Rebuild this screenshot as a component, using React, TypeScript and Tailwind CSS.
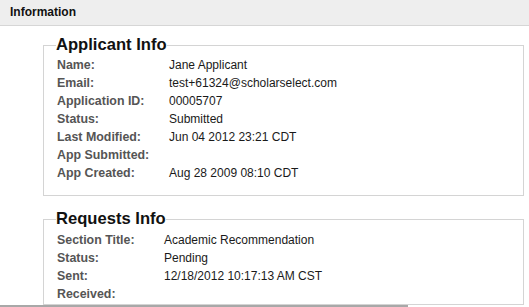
import React from "react";

const applicant: [string, string][] = [
  ["Name:", "Jane Applicant"],
  ["Email:", "test+61324@scholarselect.com"],
  ["Application ID:", "00005707"],
  ["Status:", "Submitted"],
  ["Last Modified:", "Jun 04 2012 23:21 CDT"],
  ["App Submitted:", ""],
  ["App Created:", "Aug 28 2009 08:10 CDT"],
];

const requests: [string, string][] = [
  ["Section Title:", "Academic Recommendation"],
  ["Status:", "Pending"],
  ["Sent:", "12/18/2012 10:17:13 AM CST"],
  ["Received:", ""],
];

function Rows({ rows, labelWidth }: { rows: [string, string][]; labelWidth: "a" | "b" }) {
  return (
    <div className={labelWidth === "a" ? "grid grid-cols-[112px_1fr]" : "grid grid-cols-[107px_1fr]"}>
      {rows.map(([k, v]) => (
        <React.Fragment key={k}>
          <div className="h-[18px] leading-[18px] text-[12.4px] font-bold text-[#555555] whitespace-nowrap">{k}</div>
          <div className="h-[18px] leading-[18px] text-[12px] text-[#1a1a1a] whitespace-nowrap">{v}</div>
        </React.Fragment>
      ))}
    </div>
  );
}

export default function App() {
  return (
    <div className="w-[529px] h-[307px] overflow-hidden bg-white" style={{ fontFamily: '"Liberation Sans", Arial, sans-serif' }}>
      <div className="h-[26px] bg-[#eeeeee] border-b border-[#d6d6d6] pl-[10px] leading-[25px] text-[12px] font-bold text-[#111111]">
        Information
      </div>
      <div className="ml-[43px] mr-[5px]">
        <fieldset className="mt-[10px] border border-[#d4d4d4] pl-[13px] pt-[2px] pb-[13px]">
          <legend className="-ml-px px-0 leading-[18px] text-[16.6px] font-bold text-[#111111]">Applicant Info</legend>
          <Rows rows={applicant} labelWidth="a" />
        </fieldset>
        <fieldset className="mt-[14px] border border-[#d4d4d4] pl-[13px] pt-[3px] pb-[1px]">
          <legend className="-ml-px px-0 leading-[18px] text-[16.6px] font-bold text-[#111111]">Requests Info</legend>
          <Rows rows={requests} labelWidth="b" />
        </fieldset>
      </div>
      <div className="h-[2px] w-[408px] bg-[#a8a8a8]" />
    </div>
  );
}
